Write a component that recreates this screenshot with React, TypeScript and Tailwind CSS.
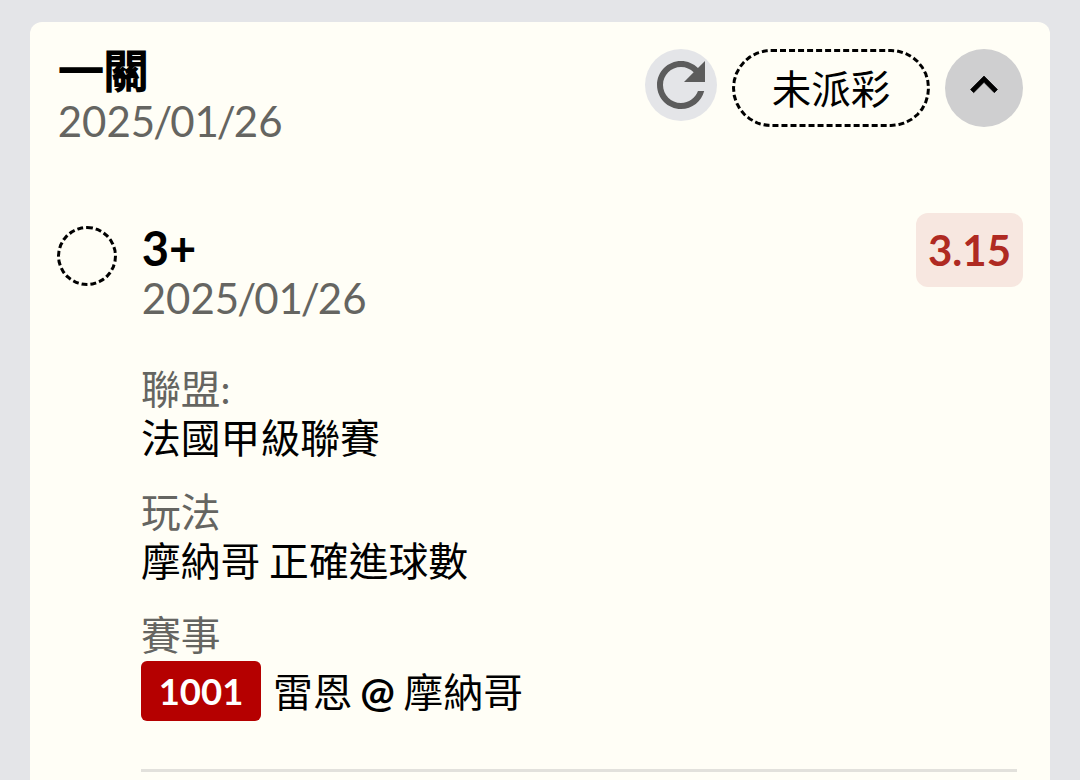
import type { ReactNode } from "react";

interface FieldProps {
  label: string;
  children: ReactNode;
}

function RefreshIcon() {
  return (
    <svg viewBox="0 0 24 24" className="size-[72px] fill-[#5c5c5c]">
      <path d="M17.65 6.35C16.2 4.9 14.21 4 12 4c-4.42 0-7.99 3.58-7.99 8s3.57 8 7.99 8c3.73 0 6.84-2.55 7.73-6h-2.08c-.82 2.33-3.04 4-5.65 4-3.31 0-6-2.69-6-6s2.69-6 6-6c1.66 0 3.14.69 4.22 1.78L13 11h7V4l-2.35 2.35z" />
    </svg>
  );
}

function ChevronUpIcon() {
  return (
    <svg viewBox="0 0 24 24" className="mb-1.5 size-[54px] fill-black stroke-black stroke-[0.3]">
      <path d="M12 8l-6 6 1.41 1.41L12 10.83l4.59 4.58L18 14z" />
    </svg>
  );
}

function BetDate() {
  return (
    <p className="pl-[0.7px] text-[42px] leading-[50px] text-[#656561]">
      2025<span className="-mx-[2px]">/</span>01<span className="-mx-[2px]">/</span>26
    </p>
  );
}

function Field({ label, children }: FieldProps) {
  return (
    <div className="text-[39.8px] leading-[49px] [word-spacing:-1.5px]">
      <dt className="text-[#656561]">{label}</dt>
      <dd>{children}</dd>
    </div>
  );
}

export default function App() {
  return (
    <main
      lang="zh-TW"
      className="h-[780px] w-[1080px] overflow-hidden bg-[#e4e5e8] px-[30px] pt-[22px] font-[Lato,'Noto_Sans_CJK_TC',sans-serif] text-black"
    >
      <section className="h-[800px] rounded-t-xl bg-[#fffef6] px-[27px] pt-[27px]">
        <header className="flex items-start justify-between">
          <div>
            <h1 className="-mt-0.5 h-[49px] pl-[1.5px] text-[45px] leading-[48px] font-normal [-webkit-text-stroke:2px_black]">
              一關
            </h1>
            <BetDate />
          </div>
          <div className="flex items-start gap-[15px]">
            <button className="size-[72px] rounded-full bg-[#e4e5e8]" aria-label="refresh">
              <RefreshIcon />
            </button>
            <span className="flex h-[78px] w-[198px] items-center justify-center rounded-full border-3 border-dashed border-black pt-0.5 text-[39.5px]">
              未派彩
            </span>
            <button className="flex size-[78px] items-center justify-center rounded-full bg-[#cfcfd0]" aria-label="collapse">
              <ChevronUpIcon />
            </button>
          </div>
        </header>

        <article className="mt-20 flex items-start">
          <span className="size-[60px] shrink-0 rounded-full border-3 border-dashed border-black" />
          <div className="ml-6 flex-1 pr-1.5">
            <div className="-mr-1.5 flex items-start justify-between">
              <div className="-mt-0.5">
                <h2 className="h-[49px] pl-[0.7px] text-[47px] leading-[48px] font-bold">3+</h2>
                <BetDate />
              </div>
              <span className="-mt-[13px] flex h-[74px] w-[107px] items-center justify-center rounded-xl bg-[#f7e7e0] text-[42px] font-bold text-[#af2a22]">
                3.15
              </span>
            </div>

            <dl className="mt-[41px] space-y-[25px]">
              <Field label="聯盟:">法國甲級聯賽</Field>
              <Field label="玩法">摩納哥 正確進球數</Field>
              <Field label="賽事">
                <div className="mt-0.5 flex h-[60px] items-center">
                  <span className="mr-3 flex h-[60px] w-[120px] items-center justify-center rounded-md bg-[#b50000] text-[36.5px] font-bold text-white">
                    1001
                  </span>
                  <span>
                    雷恩 <b className="-ml-px text-[41px]">@</b> 摩納哥
                  </span>
                </div>
              </Field>
            </dl>

            <hr className="mt-12 border-t-3 border-[#e2e1dc]" />
          </div>
        </article>
      </section>
    </main>
  );
}
